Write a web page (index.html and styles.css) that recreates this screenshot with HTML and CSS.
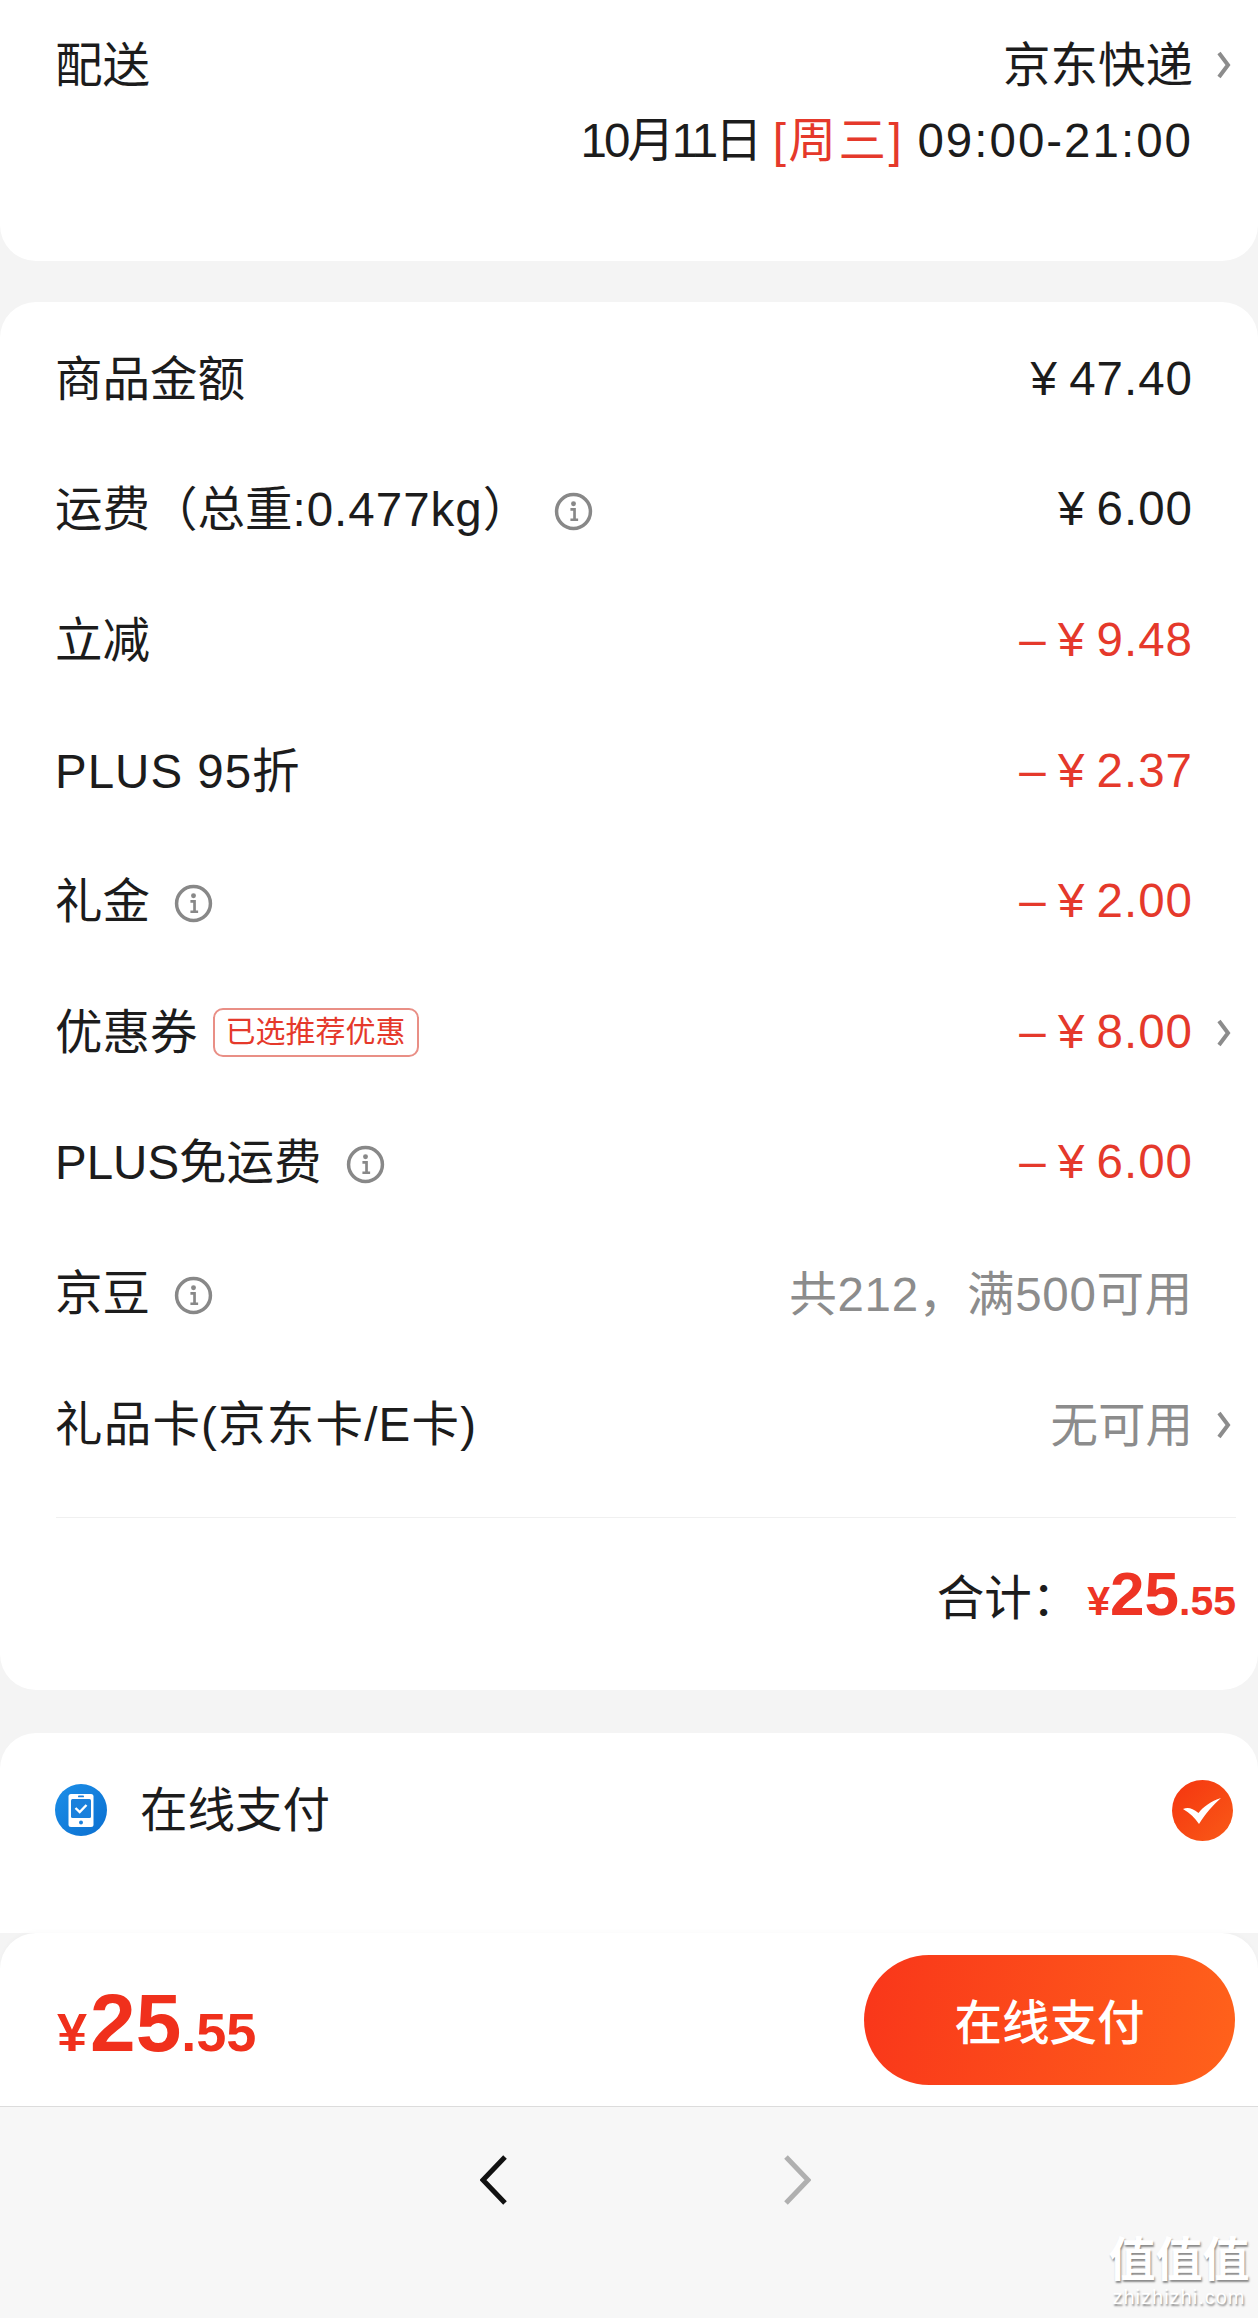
FILE: index.html
```html
<!DOCTYPE html>
<html>
<head>
    <meta charset="UTF-8">
    <title>确认订单</title>
    <link rel="stylesheet" href="styles.css">
</head>
<body>
    <div id="app">
        <!-- 配送 -->
        <div class="card card-ship">
            <div class="ship-line">
                <span>配送</span>
                <div class="row-right">
                    <span>京东快递</span>
                    <span class="arrow-slot"><svg class="arrow" viewBox="0 0 14 30"><path d="M2 3 L11 15 L2 27"/></svg></span>
                </div>
            </div>
            <div class="ship-time">
                <span><span class="ship-date">10月11日</span> <em class="red ship-week">[周三]</em> <span class="ship-hour">09:00-21:00</span></span>
                <span class="arrow-slot"></span>
            </div>
        </div>

        <!-- 金额明细 -->
        <div class="card card-fee">
            <div class="row">
                <div class="row-left">商品金额</div>
                <div class="row-right"><span class="money">¥ 47.40</span><span class="arrow-slot"></span></div>
            </div>
            <div class="row">
                <div class="row-left"><span>运费（总重<span class="wide">:0.477kg</span>）</span>
                    <svg class="info" viewBox="0 0 38 38"><circle cx="19" cy="19" r="16.5"/><circle class="dot" cx="19" cy="11.5" r="2.4"/><path class="stem" d="M16 17 H20 V26.5 M16 27 H23.500"/></svg>
                </div>
                <div class="row-right"><span class="money">¥ 6.00</span><span class="arrow-slot"></span></div>
            </div>
            <div class="row">
                <div class="row-left">立减</div>
                <div class="row-right"><span class="money red">– ¥ 9.48</span><span class="arrow-slot"></span></div>
            </div>
            <div class="row">
                <div class="row-left"><span class="wide">PLUS 95折</span></div>
                <div class="row-right"><span class="money red">– ¥ 2.37</span><span class="arrow-slot"></span></div>
            </div>
            <div class="row">
                <div class="row-left">礼金
                    <svg class="info" viewBox="0 0 38 38"><circle cx="19" cy="19" r="16.5"/><circle class="dot" cx="19" cy="11.5" r="2.4"/><path class="stem" d="M16 17 H20 V26.5 M16 27 H23.500"/></svg>
                </div>
                <div class="row-right"><span class="money red">– ¥ 2.00</span><span class="arrow-slot"></span></div>
            </div>
            <div class="row">
                <div class="row-left">优惠券<span class="tag">已选推荐优惠</span></div>
                <div class="row-right">
                    <span class="money red">– ¥ 8.00</span>
                    <span class="arrow-slot"><svg class="arrow" viewBox="0 0 14 30"><path d="M2 3 L11 15 L2 27"/></svg></span>
                </div>
            </div>
            <div class="row">
                <div class="row-left">PLUS免运费
                    <svg class="info" viewBox="0 0 38 38"><circle cx="19" cy="19" r="16.5"/><circle class="dot" cx="19" cy="11.5" r="2.4"/><path class="stem" d="M16 17 H20 V26.5 M16 27 H23.500"/></svg>
                </div>
                <div class="row-right"><span class="money red">– ¥ 6.00</span><span class="arrow-slot"></span></div>
            </div>
            <div class="row">
                <div class="row-left">京豆
                    <svg class="info" viewBox="0 0 38 38"><circle cx="19" cy="19" r="16.5"/><circle class="dot" cx="19" cy="11.5" r="2.4"/><path class="stem" d="M16 17 H20 V26.5 M16 27 H23.500"/></svg>
                </div>
                <div class="row-right"><span class="gray wide-gray">共212，满500可用</span><span class="arrow-slot"></span></div>
            </div>
            <div class="row">
                <div class="row-left"><span class="wider">礼品卡(京东卡/E卡)</span></div>
                <div class="row-right">
                    <span class="gray">无可用</span>
                    <span class="arrow-slot"><svg class="arrow" viewBox="0 0 14 30"><path d="M2 3 L11 15 L2 27"/></svg></span>
                </div>
            </div>
            <div class="total">
                <span class="total-label">合计：</span>
                <span class="price price-small"><i>¥</i><b>25</b><i>.55</i></span>
            </div>
        </div>

        <!-- 支付方式 -->
        <div class="card card-pay">
            <svg class="pay-icon" viewBox="0 0 52 52">
                <defs>
                    <linearGradient id="payBlue" x1="0" y1="0" x2="1" y2="1">
                        <stop offset="0" stop-color="#1c8fe8"/>
                        <stop offset="1" stop-color="#0b6fd0"/>
                    </linearGradient>
                </defs>
                <circle cx="26" cy="26" r="26" fill="url(#payBlue)"/>
                <rect x="13.500" y="10" width="25" height="33" rx="2.500" fill="#fff"/>
                <rect x="16" y="15" width="20" height="19" rx="1.500" fill="#1a80dc"/>
                <rect x="23" y="11.500" width="6" height="1.800" rx="0.900" fill="#1a80dc"/>
                <circle cx="26" cy="38.500" r="2" fill="#1a80dc"/>
                <path d="M20.500 24 L24.700 28 L31.500 21" fill="none" stroke="#fff" stroke-width="2.400"/>
            </svg>
            <span class="pay-name">在线支付</span>
            <svg class="pay-check" viewBox="0 0 61 61">
                <defs>
                    <linearGradient id="checkRed" x1="0" y1="0" x2="1" y2="1">
                        <stop offset="0" stop-color="#f5350f"/>
                        <stop offset="1" stop-color="#f95a18"/>
                    </linearGradient>
                </defs>
                <circle cx="30.500" cy="30.500" r="30.500" fill="url(#checkRed)"/>
                <path d="M11 29 C16 27 20 28 26.500 33 C31 27 39 21 49 18 C41 25 34 33 27 44 C23 38 18 33 11 29 Z" fill="#fff"/>
            </svg>
        </div>

        <!-- 底部结算 -->
        <div class="pay-bar">
            <span class="price price-big"><i>¥</i><b>25</b><i>.55</i></span>
            <button class="pay-btn">在线支付</button>
        </div>

        <!-- 浏览器导航 -->
        <div class="nav">
            <svg class="nav-arrow nav-back" viewBox="0 0 28 52"><path d="M25 3 L3 26 L25 49"/></svg>
            <svg class="nav-arrow nav-next" viewBox="0 0 28 52"><path d="M3 3 L25 26 L3 49"/></svg>
        </div>

        <div class="watermark">
            <div class="watermark-name">值值值</div>
            <div class="watermark-url">zhizhizhi.com</div>
        </div>
    </div>
</body>
</html>
```

FILE: styles.css
```css
* {
  margin: 0px;
  padding: 0px;
  box-sizing: border-box;
}
html, body {
  height: 100%;
}
body {
  background: #f4f4f4;
  font-family: "Liberation Sans", "Noto Sans CJK SC", sans-serif;
  font-size: 47.5px;
  color: #1c1c1c;
}
em, i {
  font-style: normal;
}
#app {
  position: relative;
  width: 1258px;
  height: 2318px;
  overflow: hidden;
}
.red {
  color: #e5392b;
}
.gray {
  color: #8c8c8c;
  padding-bottom: 3px;
}
.wide {
  letter-spacing: 1px;
}
.wider {
  letter-spacing: 1.2px;
}
.wide-gray {
  letter-spacing: .7px;
}
.card {
  background: #fff;
  border-radius: 36px;
}

/* 配送 */
.card-ship {
  height: 261px;
  padding: 26px 27px 0px 55px;
  border-radius: 0px 0px 36px 36px;
  margin-bottom: 41px;
}
.ship-line {
  display: flex;
  justify-content: space-between;
  align-items: center;
  height: 70px;
}
.ship-line .arrow-slot {
  margin-top: 8px;
}
.ship-time {
  display: flex;
  justify-content: flex-end;
  align-items: center;
  height: 70px;
  margin-top: 5px;
}
.ship-date {
  letter-spacing: -3px;
}
.ship-week {
  letter-spacing: 2.5px;
}
.ship-hour {
  letter-spacing: 2px;
}

/* 金额明细 */
.card-fee {
  height: 1388px;
  padding-top: 11px;
  margin-bottom: 43px;
}
.row {
  display: flex;
  justify-content: space-between;
  align-items: center;
  height: 130.6px;
  padding: 0px 27px 0px 55px;
}
.row-left {
  display: flex;
  align-items: center;
  padding-bottom: 6px;
}
.row-right {
  display: flex;
  align-items: center;
}
.row .arrow-slot {
  margin-top: 4px;
}
.money {
  letter-spacing: 1px;
  word-spacing: -3px;
}
.arrow-slot {
  display: flex;
  justify-content: flex-end;
  width: 38px;
}
.arrow {
  width: 14px;
  height: 30px;
  fill: none;
  stroke: #8c8c8c;
  stroke-width: 4;
}
.info {
  width: 39px;
  height: 39px;
  margin-top: 12px;
  margin-left: 24px;
  fill: none;
  stroke: #888;
  stroke-width: 3.4;
}
.info .dot {
  fill: #888;
  stroke: none;
}
.info .stem {
  stroke-width: 2.6;
}
.tag {
  height: 49px;
  line-height: 44px;
  margin-top: 8px;
  margin-left: 15px;
  padding: 0px 11px;
  border: 2.5px solid #e98f86;
  border-radius: 10px;
  font-size: 30px;
  color: #e5392b;
}
.total {
  display: flex;
  justify-content: flex-end;
  align-items: baseline;
  height: 138px;
  margin: 29px 22px 0px 56px;
  padding-top: 40px;
  border-top: 1px solid #f0f0f0;
}
.total-label {
  margin-right: 8px;
}
.price {
  color: #ee3424;
  font-weight: bold;
}
.price-small i {
  font-size: 41px;
}
.price-small b {
  font-size: 62px;
}

/* 支付方式 */
.card-pay {
  display: flex;
  align-items: center;
  height: 200px;
  padding: 0px 25px 46px 55px;
  border-radius: 36px 36px 0px 0px;
}
.pay-icon {
  width: 52px;
  height: 52px;
}
.pay-name {
  margin-left: 33px;
  padding-bottom: 8px;
}
.pay-check {
  width: 61px;
  height: 61px;
  margin-left: auto;
}

/* 底部结算 */
.pay-bar {
  display: flex;
  justify-content: space-between;
  align-items: center;
  height: 174px;
  padding: 0px 23px 0px 57px;
  background: #fff;
  border-radius: 36px 36px 0px 0px;
  box-shadow: 0px -2px 4px rgba(0, 0, 0, .02);
  border-bottom: 1px solid #dcdcdc;
}
.price-big {
  padding-top: 6px;
  color: #f0301c;
}
.price-big i {
  font-size: 54px;
}
.price-big i:first-child {
  margin-right: 3px;
}
.price-big b {
  font-size: 82px;
}
.pay-btn {
  width: 371px;
  height: 130px;
  border: none;
  border-radius: 65px;
  background: linear-gradient(100deg, #f9361a, #ff621b);
  color: #fff;
  font-family: "Liberation Sans", "Noto Sans CJK SC", sans-serif;
  font-size: 47.5px;
  font-weight: 500;
}

/* 浏览器导航 */
.nav {
  display: flex;
  gap: 275px;
  height: 211px;
  padding: 47px 0px 0px 480px;
  background: #f7f7f7;
}
.nav-arrow {
  width: 28px;
  height: 52px;
  fill: none;
  stroke-width: 5;
}
.nav-back {
  stroke: #111;
}
.nav-next {
  stroke: #b0b0b0;
}

/* 水印 */
.watermark {
  position: absolute;
  right: 6px;
  bottom: 10px;
  width: 146px;
  text-align: center;
  color: #fff;
  text-shadow: 1px 2px 2px #8a8a8a;
}
.watermark-name {
  font-size: 47px;
  line-height: 52px;
  font-weight: bold;
}
.watermark-url {
  font-size: 20px;
  line-height: 22px;
  letter-spacing: 1px;
}
```
